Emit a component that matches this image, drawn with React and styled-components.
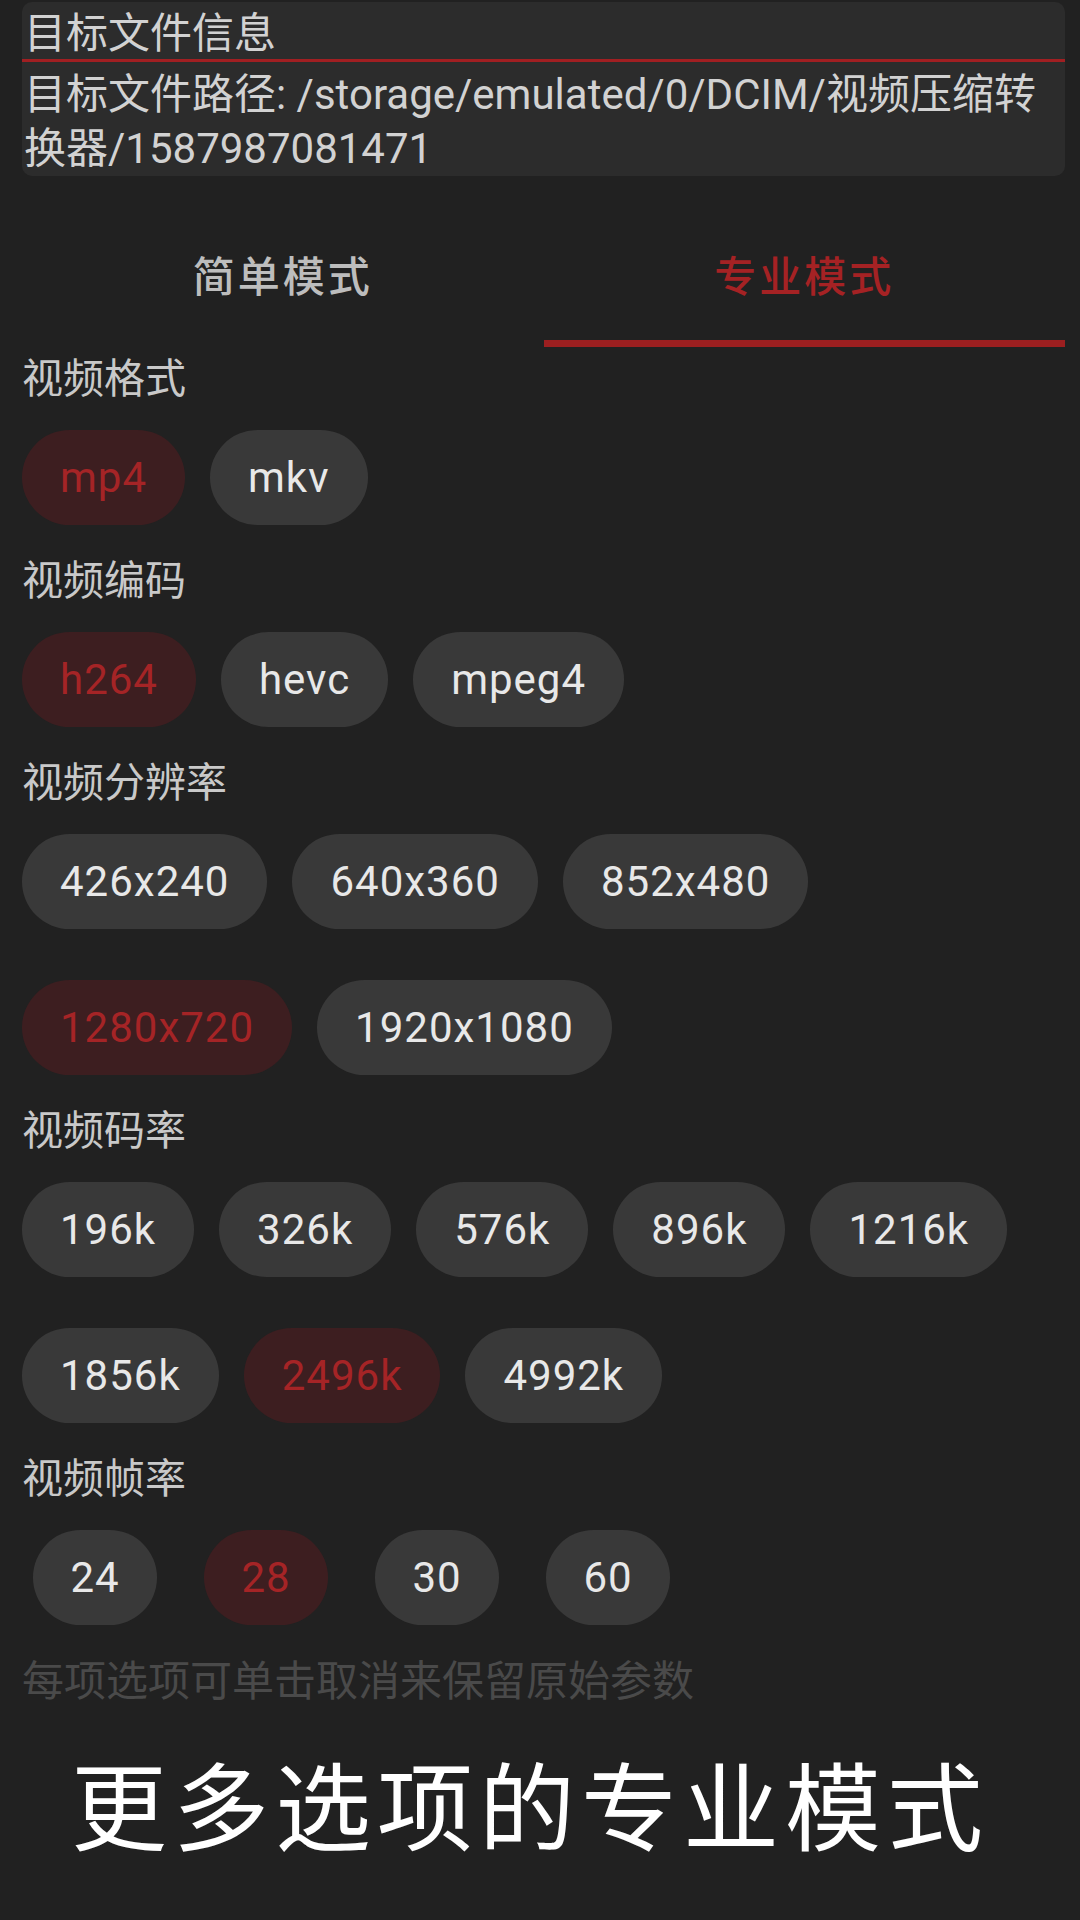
import React, { useState } from 'react'
import styled, { createGlobalStyle } from 'styled-components'

const GlobalStyle = createGlobalStyle`
  html, body {
    margin: 0;
    padding: 0;
    background: #212121;
  }
  body {
    font-family: Roboto, "Noto Sans CJK SC", sans-serif;
  }
`

const sections = [
  { title: '视频格式', options: ['mp4', 'mkv'], active: 'mp4' },
  { title: '视频编码', options: ['h264', 'hevc', 'mpeg4'], active: 'h264' },
  { title: '视频分辨率', options: ['426x240', '640x360', '852x480', '1280x720', '1920x1080'], active: '1280x720' },
  { title: '视频码率', options: ['196k', '326k', '576k', '896k', '1216k', '1856k', '2496k', '4992k'], active: '2496k' },
  { title: '视频帧率', options: ['24', '28', '30', '60'], active: '28', narrow: true },
]

const App = () => {
  const [tab, setTab] = useState(1)
  const [picked, setPicked] = useState(sections.map(s => s.active))

  const toggle = (si, opt) => {
    const next = [...picked]
    next[si] = next[si] === opt ? null : opt
    setPicked(next)
  }

  return (
    <Page>
      <GlobalStyle />
      <InfoCard>
        <InfoTitle>目标文件信息</InfoTitle>
        <InfoPath>目标文件路径: /storage/emulated/0/DCIM/视频压缩转换器/1587987081471</InfoPath>
      </InfoCard>

      <Tabs>
        <Tab active={tab === 0} onClick={() => setTab(0)}>简单模式</Tab>
        <Tab active={tab === 1} onClick={() => setTab(1)}>专业模式</Tab>
      </Tabs>

      {sections.map((s, si) => (
        <Section key={s.title}>
          <Label>{s.title}</Label>
          <ChipGroup>
            {s.options.map(opt => (
              <Chip
                key={opt}
                active={picked[si] === opt}
                narrow={s.narrow}
                onClick={() => toggle(si, opt)}
              >
                {opt}
              </Chip>
            ))}
          </ChipGroup>
        </Section>
      ))}

      <Hint>每项选项可单击取消来保留原始参数</Hint>
      <Caption>更多选项的专业模式</Caption>
    </Page>
  )
}

const Page = styled.div`
  width: 1080px;
  min-height: 1920px;
  box-sizing: border-box;
  padding: 2px 15px 0 22px;
  background: #212121;
  display: flex;
  flex-direction: column;
`

const InfoCard = styled.div`
  background: #2c2c2c;
  border-radius: 10px;
  padding: 0 2px 0 2px;
  display: flex;
  flex-direction: column;
`

const InfoTitle = styled.div`
  font-size: 42px;
  line-height: 50px;
  padding: 7px 2px 0;
  color: #d2d2d2;
  border-bottom: 3px solid #a11f22;
  margin: 0 -2px;
`

const InfoPath = styled.div`
  font-size: 42px;
  line-height: 54px;
  padding-top: 6px;
  color: #d2d2d2;
  word-break: break-all;
`

const Tabs = styled.div`
  display: flex;
  margin-top: 28px;
  height: 143px;
`

const Tab = styled.div`
  flex: 1;
  display: flex;
  align-items: center;
  justify-content: center;
  box-sizing: border-box;
  padding-top: 3px;
  font-size: 42px;
  letter-spacing: 3px;
  font-weight: 500;
  color: ${p => (p.active ? '#a52224' : '#bdbdbd')};
  border-bottom: 7px solid ${p => (p.active ? '#9c1f20' : 'transparent')};
  cursor: pointer;
`

const Section = styled.div`
  display: flex;
  flex-direction: column;
`

const Label = styled.div`
  font-size: 41px;
  line-height: 56px;
  padding-top: 4px;
  color: #c9c9c9;
`

const ChipGroup = styled.div`
  display: flex;
  flex-wrap: wrap;
  column-gap: 25px;
  row-gap: 51px;
  padding: 23px 0 24px;
`

const Chip = styled.div`
  height: 95px;
  box-sizing: border-box;
  border-radius: 48px;
  display: flex;
  align-items: center;
  justify-content: center;
  font-size: 42px;
  letter-spacing: 1px;
  padding: 0 ${p => (p.narrow ? '0' : '38px')};
  width: ${p => (p.narrow ? '124px' : 'auto')};
  margin: 0 ${p => (p.narrow ? '11px' : '0')};
  background: ${p => (p.active ? '#3d1e20' : '#393939')};
  color: ${p => (p.active ? '#a52426' : '#e8e8e8')};
  cursor: pointer;
`

const Hint = styled.div`
  font-size: 42px;
  line-height: 56px;
  padding-top: 5px;
  color: #4a4a4a;
`

const Caption = styled.div`
  margin-top: 27px;
  margin-left: -22px;
  margin-right: -15px;
  padding-right: 20px;
  text-align: center;
  font-family: "Noto Sans CJK SC", sans-serif;
  font-size: 96px;
  line-height: 130px;
  letter-spacing: 6px;
  color: #ffffff;
`

export default App
